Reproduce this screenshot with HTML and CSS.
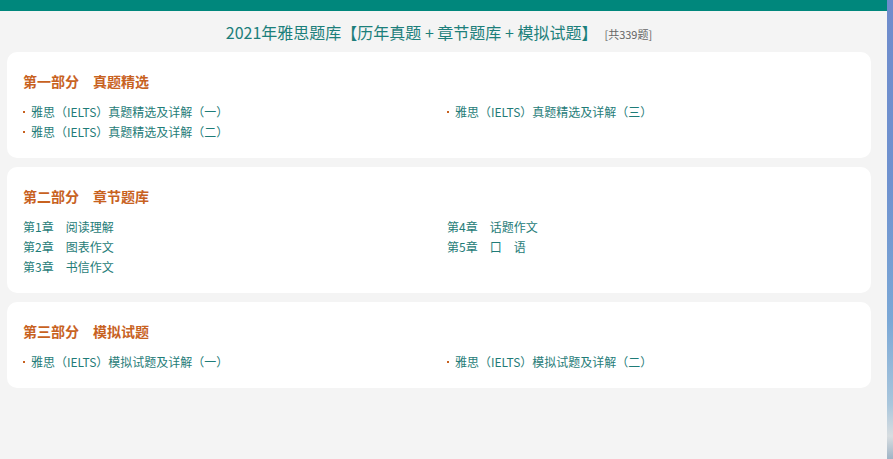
FILE: index.html
```html
<!DOCTYPE html>
<html lang="zh-CN">
<head>
<meta charset="utf-8">
<title>2021年雅思题库</title>
<link rel="stylesheet" href="styles.css">
</head>
<body>
<div class="page">
  <div class="topbar"></div>
  <div class="content">
    <h1 class="title">2021年雅思题库【历年真题 + 章节题库 + 模拟试题】<span class="count">[共339题]</span></h1>

    <section class="card">
      <h2 class="card-title">第一部分　真题精选</h2>
      <div class="cols">
        <ul class="list bullets">
          <li>雅思（IELTS）真题精选及详解（一）</li>
          <li>雅思（IELTS）真题精选及详解（二）</li>
        </ul>
        <ul class="list bullets">
          <li>雅思（IELTS）真题精选及详解（三）</li>
        </ul>
      </div>
    </section>

    <section class="card">
      <h2 class="card-title">第二部分　章节题库</h2>
      <div class="cols">
        <ul class="list">
          <li>第1章　阅读理解</li>
          <li>第2章　图表作文</li>
          <li>第3章　书信作文</li>
        </ul>
        <ul class="list">
          <li>第4章　话题作文</li>
          <li>第5章　口　语</li>
        </ul>
      </div>
    </section>

    <section class="card">
      <h2 class="card-title">第三部分　模拟试题</h2>
      <div class="cols">
        <ul class="list bullets">
          <li>雅思（IELTS）模拟试题及详解（一）</li>
        </ul>
        <ul class="list bullets">
          <li>雅思（IELTS）模拟试题及详解（二）</li>
        </ul>
      </div>
    </section>
  </div>
</div>
<div class="edge"></div>
</body>
</html>
```

FILE: styles.css
```css
html, body {
  margin: 0;
  padding: 0;
  height: 100%;
}
body {
  display: flex;
  background: #f4f4f4;
  font-family: "Noto Sans CJK SC", "Noto Sans", sans-serif;
  overflow: hidden;
}
.page {
  flex: 1;
  min-width: 0;
  background: #f4f4f4;
}
.edge {
  width: 6px;
  flex: none;
  background: linear-gradient(to bottom, #6f8ccc 0%, #6f92cf 40%, #7ba8d6 70%, #a9c6dc 88%, #d8dde0 95%, #9fb4c6 100%);
}
.topbar {
  height: 11px;
  background: #00877c;
}
.content {
  padding: 0 16px 0 7px;
}
.title {
  margin: 10px 0 9px;
  height: 22px;
  font-size: 16px;
  line-height: 22px;
  font-weight: normal;
  color: #1c7f7b;
  text-align: center;
}
.count {
  font-size: 11px;
  line-height: 0;
  color: #666;
  margin-left: 7px;
}
.card {
  background: #fff;
  border-radius: 10px;
  padding: 20px 0 16px 16px;
  margin-bottom: 9px;
}
.card-title {
  margin: 0 0 12px;
  height: 18px;
  font-size: 14px;
  line-height: 18px;
  font-weight: bold;
  color: #c8621f;
}
.cols {
  display: grid;
  grid-template-columns: 424px 1fr;
}
.list {
  list-style: none;
  margin: 0;
  padding: 0;
}
.list li {
  font-size: 12px;
  height: 20px;
  line-height: 20px;
  color: #1f7c78;
  white-space: nowrap;
}
.bullets li {
  display: flex;
  align-items: center;
}
.bullets li::before {
  content: "";
  width: 2px;
  height: 2px;
  background: #c8621f;
  margin-right: 6px;
  flex: none;
}
```
